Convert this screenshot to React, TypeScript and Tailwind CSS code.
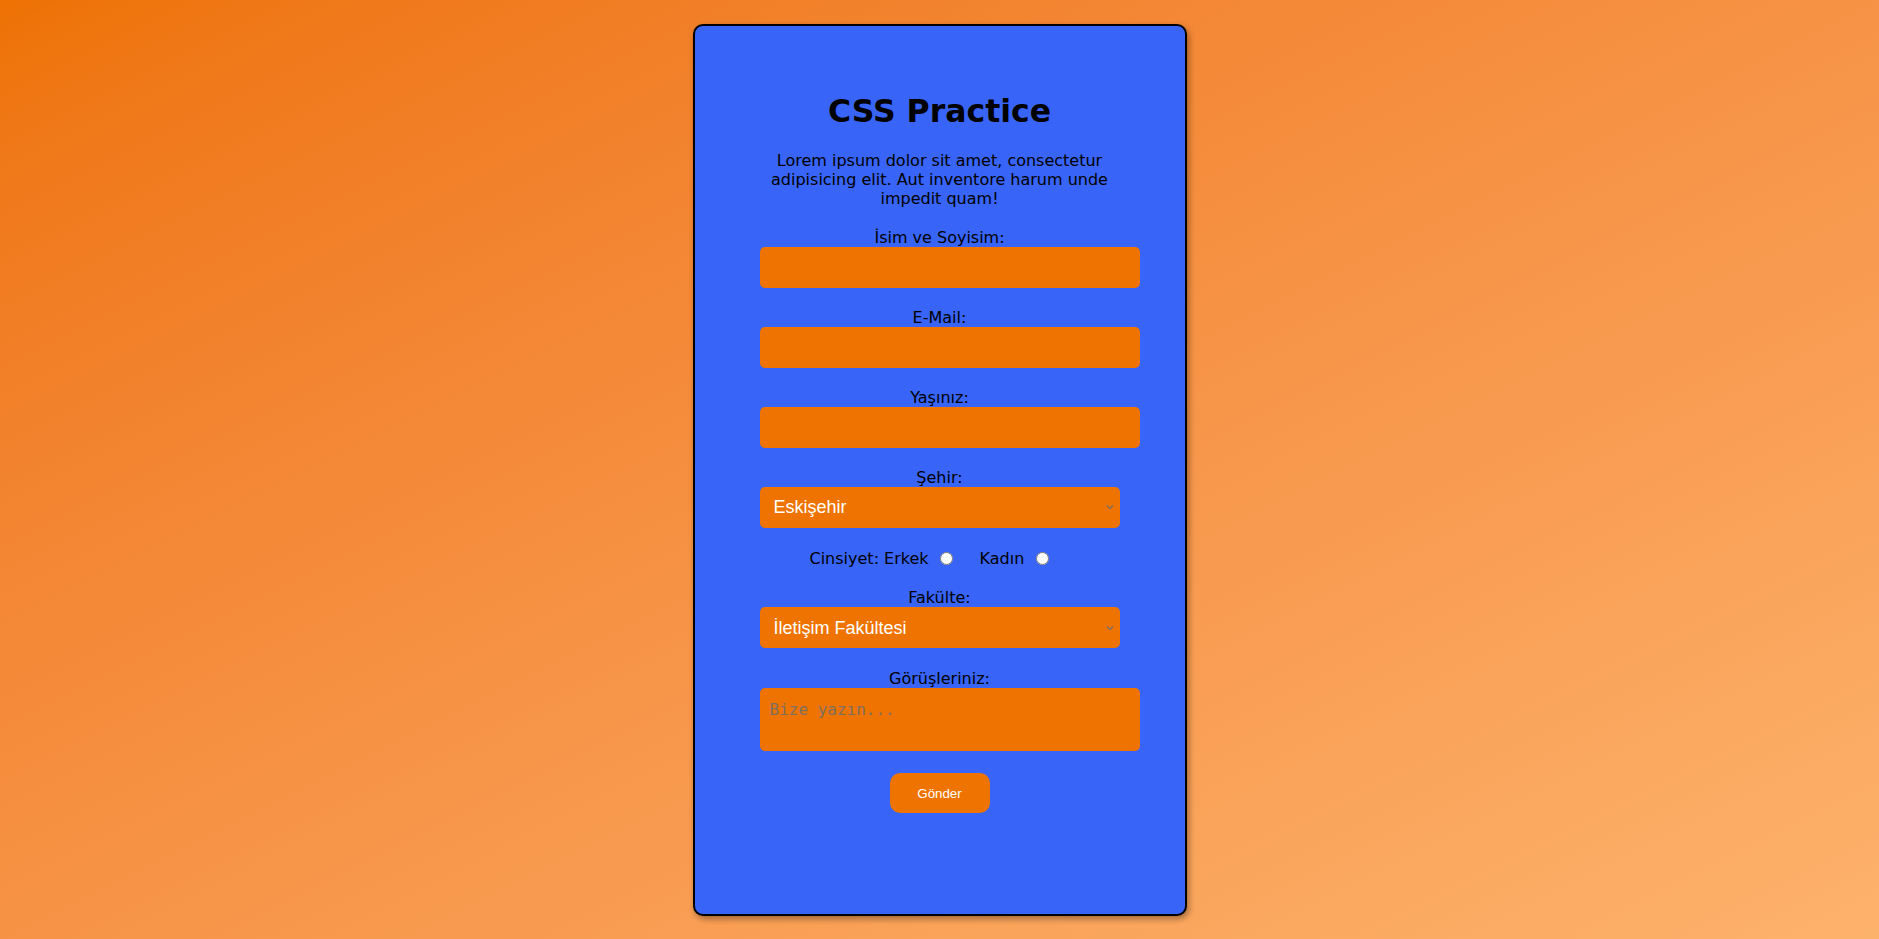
import { ReactNode } from 'react';

function Field({ label, children }: { label: string; children: ReactNode }) {
    return (
        <div className="flex flex-col items-center">
            <label className="block leading-[normal]">{label}</label>
            {children}
        </div>
    );
}

function Chevron() {
    return (
        <svg className="pointer-events-none absolute right-[6px] top-1/2 -translate-y-1/2" width="8" height="5" viewBox="0 0 8 5" fill="none">
            <polyline points="1,1 4,4 7,1" stroke="#7d6e62" strokeWidth="1.3" />
        </svg>
    );
}

function Select({ value, options }: { value: string; options: string[] }) {
    return (
        <div className="relative w-[360px] self-start">
            <select
                defaultValue={value}
                className="block w-[360px] h-[41.5px] appearance-none rounded-[5px] bg-[#ee7300] pl-[14px] text-[18px] text-white font-['Liberation_Sans',Arial,sans-serif] outline-none"
            >
                {options.map((o) => (
                    <option key={o} value={o} className="text-black bg-white">
                        {o}
                    </option>
                ))}
            </select>
            <Chevron />
        </div>
    );
}

export default function App() {
    return (
        <div className="min-h-[939px] w-full bg-linear-to-br from-[#ee7203] to-[#fdb26c] flex items-center justify-center font-['DejaVu_Sans',Verdana,sans-serif] text-black leading-[normal]">
            <div className="w-[494px] h-[892px] rounded-[10px] border-2 border-black bg-[#3865f7] shadow-[2px_3px_6px_rgba(0,0,0,0.35)]">
                <div className="mx-auto w-[360px] flex flex-col items-center text-center">
                    {/* Heading */}
                    <h1 className="mt-[67px] text-[31.5px] font-bold leading-[normal]">CSS Practice</h1>
                    <p className="mt-[22px] text-[16px] leading-[normal]">
                        Lorem ipsum dolor sit amet, consectetur adipisicing elit. Aut inventore harum unde impedit quam!
                    </p>

                    {/* Form */}
                    <form className="mt-[20px] w-[360px] flex flex-col text-[16px]" onSubmit={(e) => e.preventDefault()}>
                        <Field label="İsim ve Soyisim:">
                            <input type="text" className="self-start w-[380px] h-[41px] mb-[20px] rounded-[5px] bg-[#ee7300] px-[10px] outline-none" />
                        </Field>
                        <Field label="E-Mail:">
                            <input type="email" className="self-start w-[380px] h-[41px] mb-[20px] rounded-[5px] bg-[#ee7300] px-[10px] outline-none" />
                        </Field>
                        <Field label="Yaşınız:">
                            <input type="number" className="self-start w-[380px] h-[41px] mb-[20px] rounded-[5px] bg-[#ee7300] px-[10px] outline-none" />
                        </Field>
                        <Field label="Şehir:">
                            <Select value="Eskişehir" options={['Eskişehir', 'Ankara', 'İstanbul', 'İzmir']} />
                        </Field>

                        {/* Gender */}
                        <div className="mt-[20.6px] flex items-center pl-[50px] leading-[normal]">
                            <span>Cinsiyet: Erkek</span>
                            <input type="radio" name="gender" className="ml-[11px] m-0 w-[13px] h-[13px]" />
                            <span className="ml-[27px]">Kadın</span>
                            <input type="radio" name="gender" className="ml-[12px] m-0 w-[13px] h-[13px]" />
                        </div>

                        <div className="mt-[20.2px]">
                            <Field label="Fakülte:">
                                <Select value="İletişim Fakültesi" options={['İletişim Fakültesi', 'Mühendislik Fakültesi', 'Hukuk Fakültesi']} />
                            </Field>
                        </div>

                        <div className="mt-[20.5px]">
                            <Field label="Görüşleriniz:">
                                <textarea
                                    placeholder="Bize yazın..."
                                    className="self-start block w-[380px] h-[63.5px] resize-none rounded-[5px] bg-[#ee7300] pl-[10px] pt-[12px] text-[16px] leading-[normal] font-['DejaVu_Sans_Mono',monospace] placeholder:text-[#7f6f5f] outline-none"
                                />
                            </Field>
                        </div>

                        <button
                            type="submit"
                            className="mx-auto mt-[22px] w-[100px] h-[40px] rounded-[10px] bg-[#ee7300] text-white text-[13.33px] font-['Liberation_Sans',Arial,sans-serif]"
                        >
                            Gönder
                        </button>
                    </form>
                </div>
            </div>
        </div>
    );
}
